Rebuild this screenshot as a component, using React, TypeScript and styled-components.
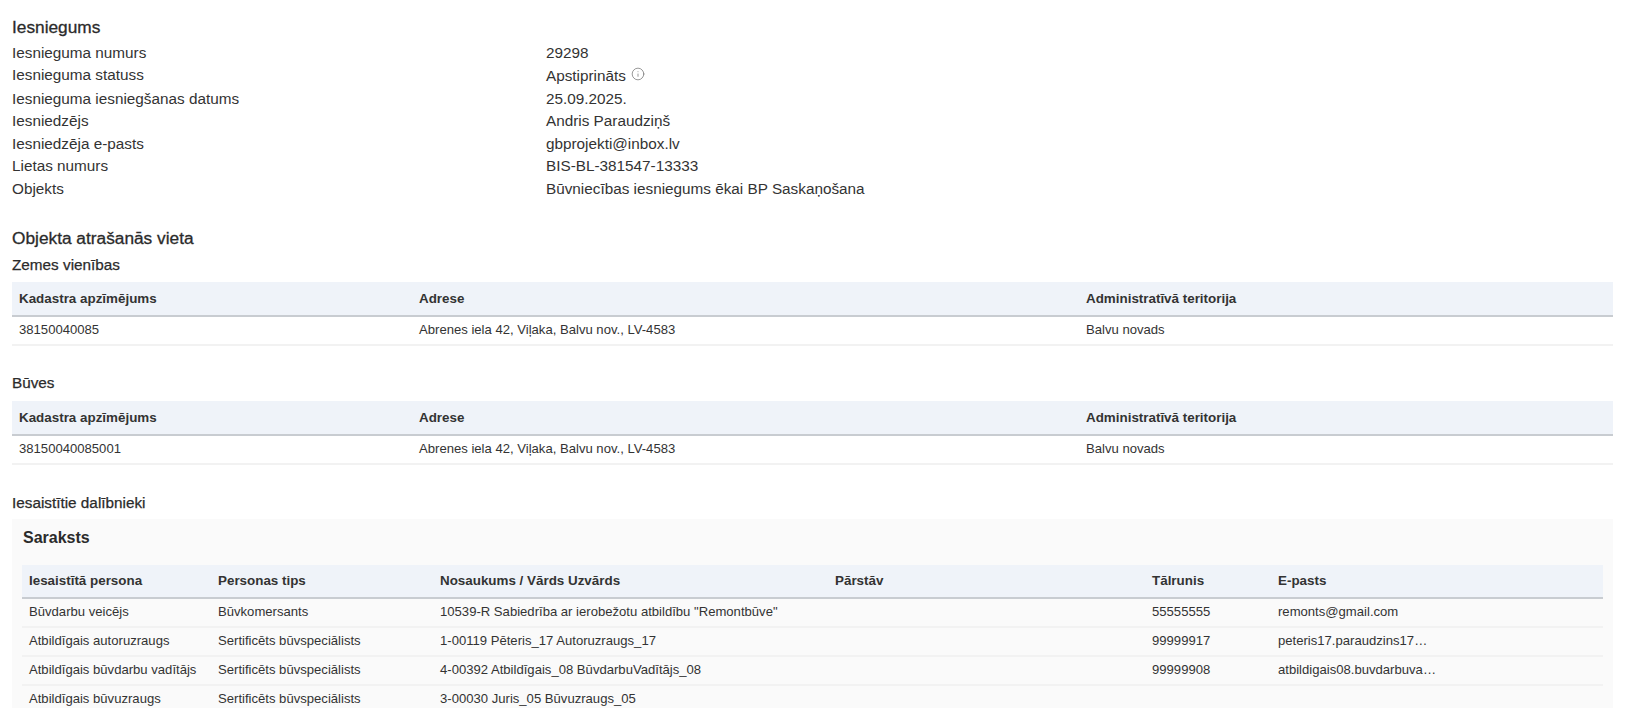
import React from "react";
import styled, { createGlobalStyle } from "styled-components";
import { Info } from "lucide-react";

const GlobalStyle = createGlobalStyle`
    html, body {
        margin: 0;
        height: 100%;
        overflow: hidden;
        background: #ffffff;
    }
    body {
        font-family: "Liberation Sans", Arial, sans-serif;
        color: #333333;
    }
`;

const Page = styled.div`
    padding: 17px 16px 0 12px;
`;

const SectionTitle = styled.h2<{ $top?: number }>`
    margin: ${(p) => p.$top ?? 0}px 0 0;
    font-size: 17.3px;
    line-height: 20px;
    font-weight: 400;
    -webkit-text-stroke: 0.3px #2b2b2b;
    color: #2b2b2b;
`;

const SubTitle = styled.h3<{ $top: number }>`
    margin: ${(p) => p.$top}px 0 0;
    font-size: 15.3px;
    line-height: 18px;
    font-weight: 400;
    -webkit-text-stroke: 0.25px #2b2b2b;
    color: #2b2b2b;
`;

const InfoList = styled.dl`
    margin: 5px 0 0;
    display: grid;
    grid-template-columns: 534px 1fr;
    font-size: 15.3px;
    line-height: 22.4px;
`;

const InfoLabel = styled.dt`
    margin: 0;
`;

const InfoValue = styled.dd<{ $tall?: boolean }>`
    margin: 0;
    display: flex;
    align-items: center;
    gap: 5px;
    min-height: ${(p) => (p.$tall ? 23.5 : 22.4)}px;
`;

const InfoIcon = styled(Info)`
    width: 14px;
    height: 14px;
    color: #6b6b6b;
    stroke-width: 1.2;
    margin-top: -5px;
`;

const Table = styled.table<{ $top: number }>`
    width: 100%;
    margin-top: ${(p) => p.$top}px;
    border-collapse: collapse;
    table-layout: fixed;
    font-size: 13.1px;
`;

const HeadCell = styled.th<{ $height: number }>`
    height: ${(p) => p.$height}px;
    padding: 0 7px;
    background: #eff3f9;
    border-bottom: 2px solid #c8ccd1;
    text-align: left;
    font-size: 13.4px;
    font-weight: 700;
    color: #333333;
    box-sizing: border-box;
`;

const BodyCell = styled.td<{ $height: number }>`
    height: ${(p) => p.$height}px;
    padding: 0 7px 2px;
    border-bottom: 2px solid #f2f2f2;
    box-sizing: border-box;
    white-space: nowrap;
`;

const Truncated = styled.span`
    display: block;
    width: 158px;
    overflow: hidden;
    text-overflow: ellipsis;
`;

const Panel = styled.section`
    margin-top: 7px;
    padding: 9px 10px 0;
    background: #fafafa;
`;

const PanelTitle = styled.h3`
    margin: 0 0 0 1px;
    font-size: 16px;
    line-height: 20px;
    font-weight: 700;
    color: #2b2b2b;
`;

const columns = ["Kadastra apzīmējums", "Adrese", "Administratīvā teritorija"];
const columnWidths = [400, 667, 534];

const participantColumns = ["Iesaistītā persona", "Personas tips", "Nosaukums / Vārds Uzvārds", "Pārstāv", "Tālrunis", "E-pasts"];
const participantWidths = [189, 222, 395, 317, 126, 332];

const info: [string, React.ReactNode][] = [
    ["Iesnieguma numurs", "29298"],
    ["Iesnieguma statuss", <>Apstiprināts <InfoIcon /></>],
    ["Iesnieguma iesniegšanas datums", "25.09.2025."],
    ["Iesniedzējs", "Andris Paraudziņš"],
    ["Iesniedzēja e-pasts", "gbprojekti@inbox.lv"],
    ["Lietas numurs", "BIS-BL-381547-13333"],
    ["Objekts", "Būvniecības iesniegums ēkai BP Saskaņošana"],
];

const participants = [
    ["Būvdarbu veicējs", "Būvkomersants", "10539-R Sabiedrība ar ierobežotu atbildību \"Remontbūve\"", "", "55555555", "remonts@gmail.com"],
    ["Atbildīgais autoruzraugs", "Sertificēts būvspeciālists", "1-00119 Pēteris_17 Autoruzraugs_17", "", "99999917", "peteris17.paraudzins17@inbox.lv"],
    ["Atbildīgais būvdarbu vadītājs", "Sertificēts būvspeciālists", "4-00392 Atbildīgais_08 BūvdarbuVadītājs_08", "", "99999908", "atbildigais08.buvdarbuvaditajs08@inbox.lv"],
    ["Atbildīgais būvuzraugs", "Sertificēts būvspeciālists", "3-00030 Juris_05 Būvuzraugs_05", "", "", ""],
];

const PlaceTable = ({ top, code }: { top: number; code: string }) =>
(
    <Table $top={top}>
        <colgroup>
            {columnWidths.map((w) => <col key={w} width={w} />)}
        </colgroup>
        <thead>
            <tr>
                {columns.map((c) => <HeadCell key={c} $height={34}>{c}</HeadCell>)}
            </tr>
        </thead>
        <tbody>
            <tr>
                <BodyCell $height={29}>{code}</BodyCell>
                <BodyCell $height={29}>Abrenes iela 42, Viļaka, Balvu nov., LV-4583</BodyCell>
                <BodyCell $height={29}>Balvu novads</BodyCell>
            </tr>
        </tbody>
    </Table>
);

const App = () =>
(
    <Page>
        <GlobalStyle />
        <SectionTitle>Iesniegums</SectionTitle>
        <InfoList>
            {info.map(([label, value], i) => (
                <React.Fragment key={label}>
                    <InfoLabel>{label}</InfoLabel>
                    <InfoValue $tall={i === 1}>{value}</InfoValue>
                </React.Fragment>
            ))}
        </InfoList>

        <SectionTitle $top={28}>Objekta atrašanās vieta</SectionTitle>
        <SubTitle $top={8}>Zemes vienības</SubTitle>
        <PlaceTable top={8} code="38150040085" />

        <SubTitle $top={28}>Būves</SubTitle>
        <PlaceTable top={9} code="38150040085001" />

        <SubTitle $top={29}>Iesaistītie dalībnieki</SubTitle>
        <Panel>
            <PanelTitle>Saraksts</PanelTitle>
            <Table $top={17}>
                <colgroup>
                    {participantWidths.map((w, i) => <col key={i} width={w} />)}
                </colgroup>
                <thead>
                    <tr>
                        {participantColumns.map((c) => <HeadCell key={c} $height={33}>{c}</HeadCell>)}
                    </tr>
                </thead>
                <tbody>
                    {participants.map((row) => (
                        <tr key={row[0]}>
                            {row.map((cell, i) => (
                                <BodyCell key={i} $height={29}>
                                    {i === 5 ? <Truncated>{cell}</Truncated> : cell}
                                </BodyCell>
                            ))}
                        </tr>
                    ))}
                </tbody>
            </Table>
        </Panel>
    </Page>
);

export default App;
